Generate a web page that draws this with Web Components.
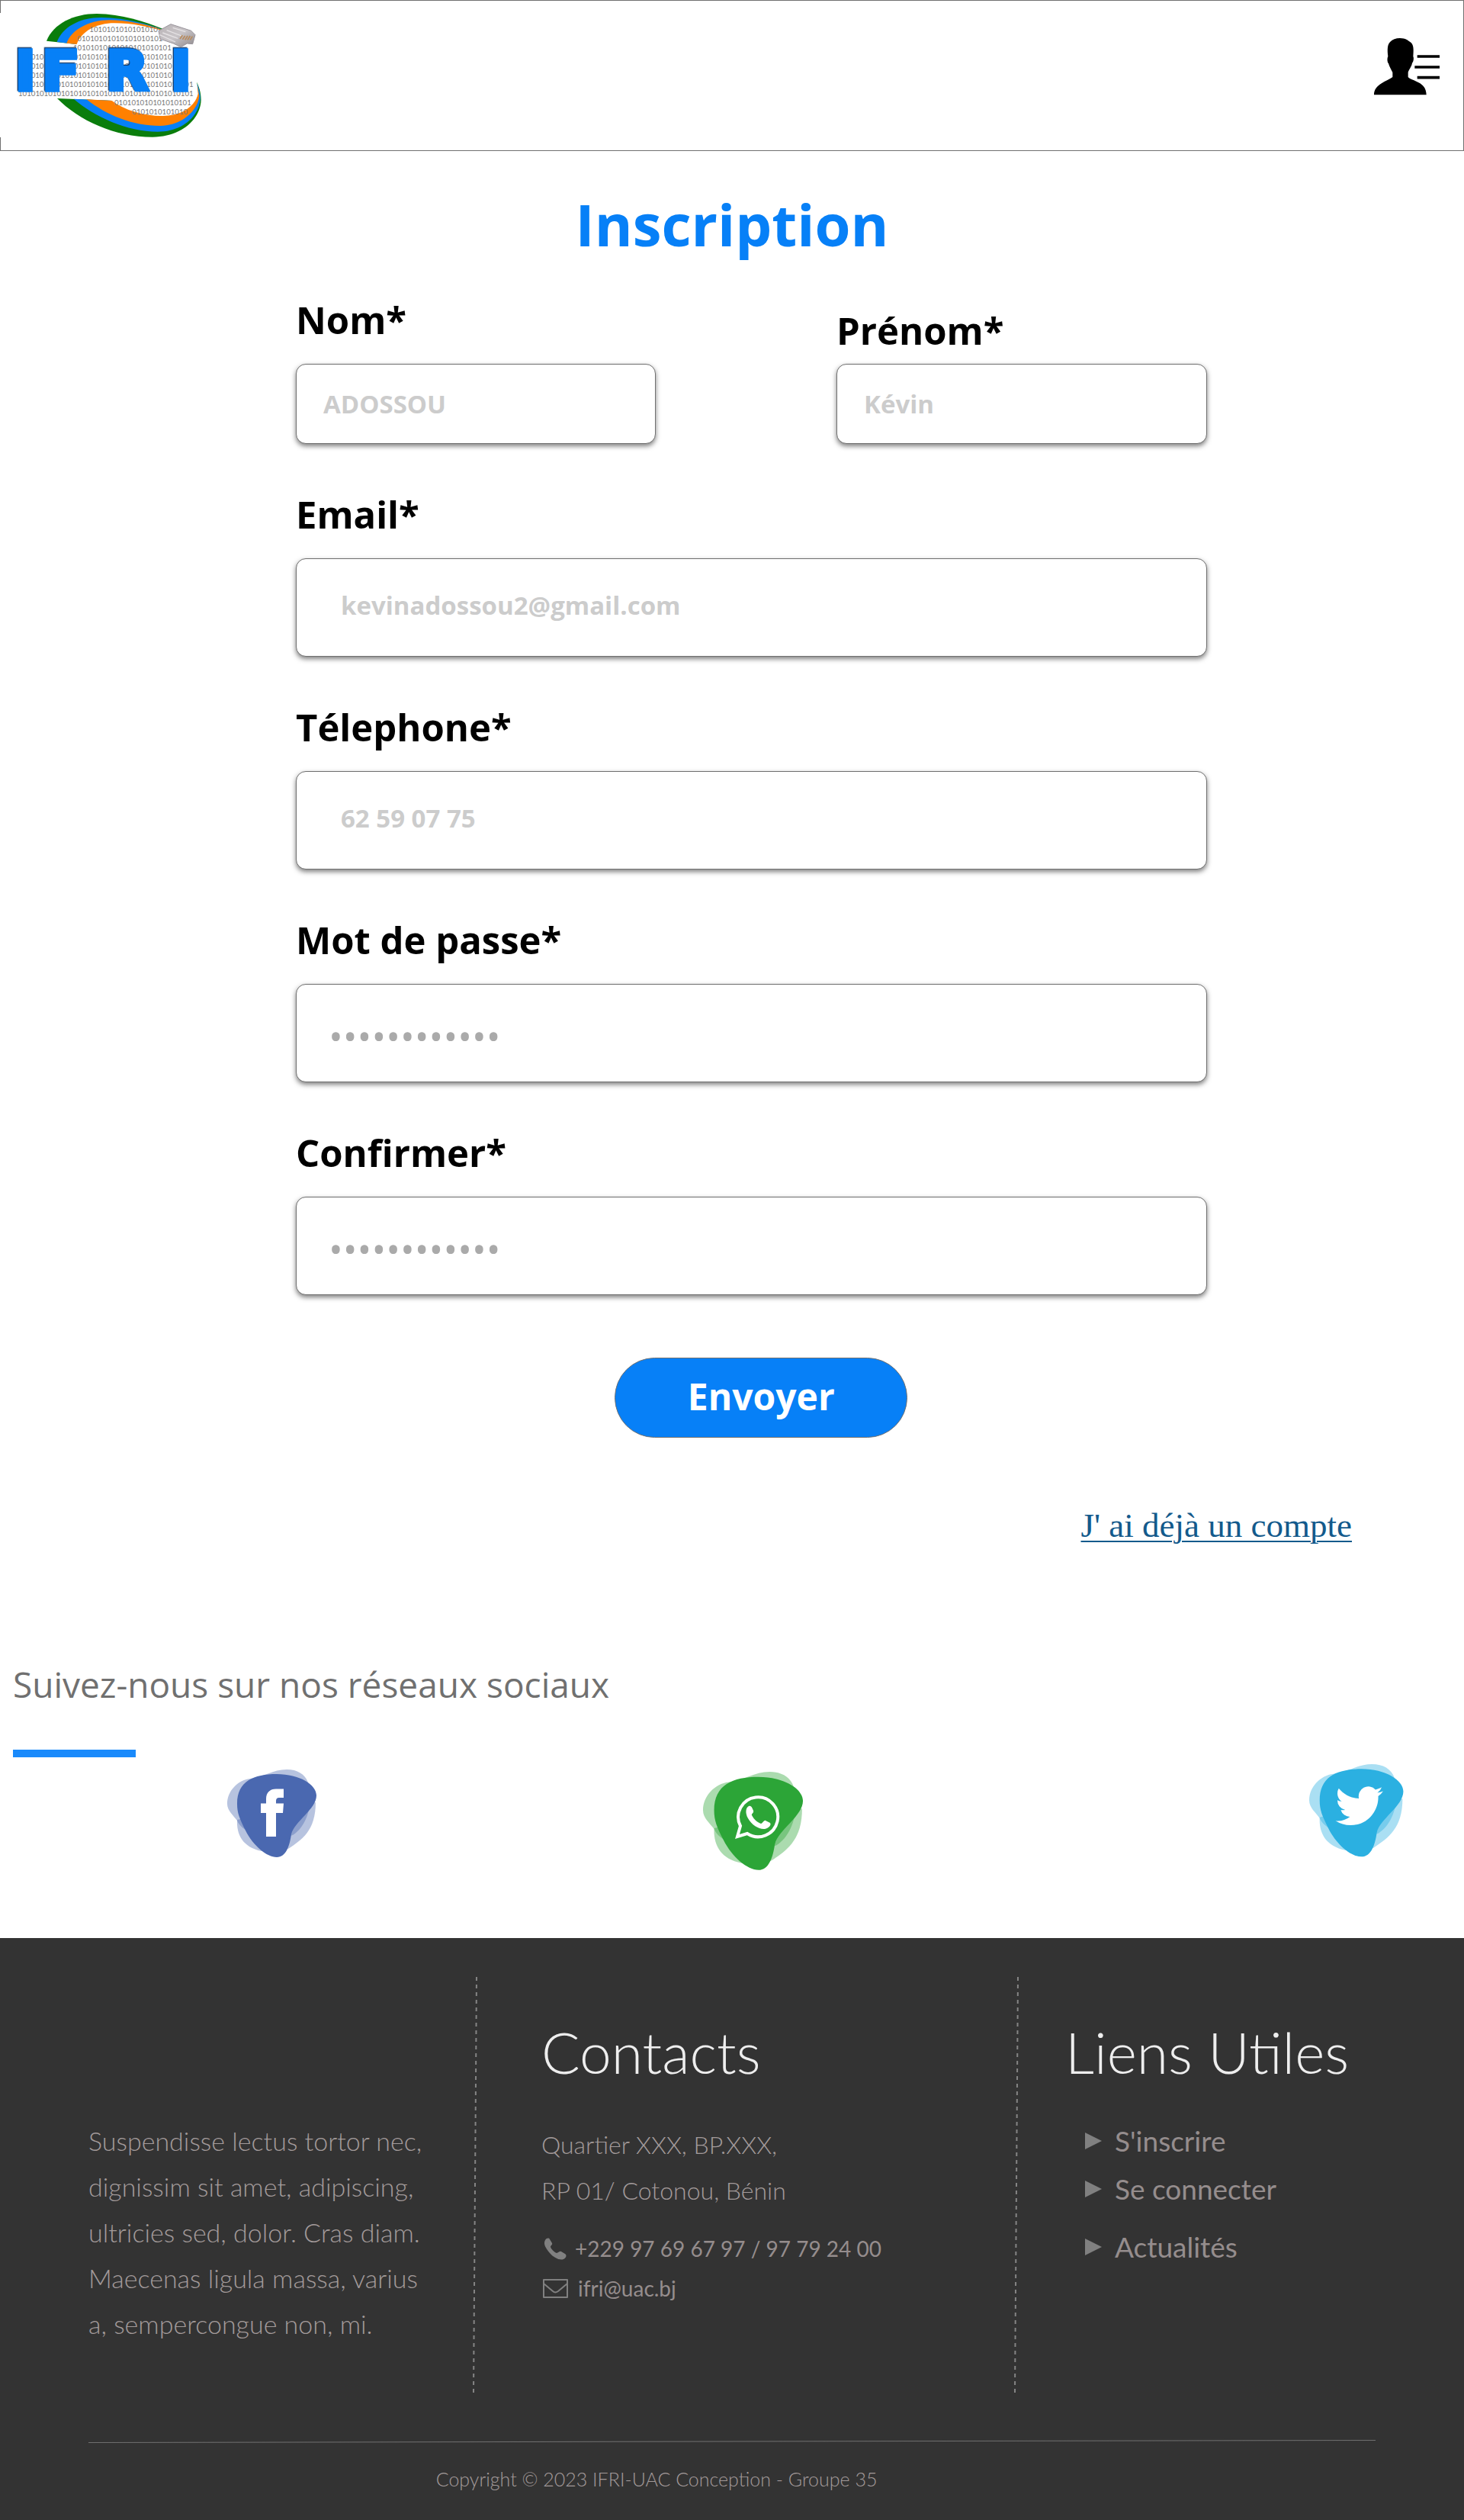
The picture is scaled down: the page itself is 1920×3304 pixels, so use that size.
<!DOCTYPE html>
<html lang="fr">
<head>
<meta charset="utf-8">
<meta name="viewport" content="width=device-width, initial-scale=1">
<title>IFRI - Inscription</title>
<style>
  body { margin: 0; background: #fff; font-family: "Open Sans", "Noto Sans", sans-serif; }
</style>
</head>
<body>
<ifri-page></ifri-page>

<template id="t-header">
  <style>
    :host { display: block; }
    header { display: flex; justify-content: space-between; align-items: center; height: 198px; padding: 0 32px 2px 0; box-sizing: border-box; box-shadow: inset 0 0 0 1px #707070; }
    a, button, svg { display: block; }
    .logo svg { background: #fff; }
    .name { filter: drop-shadow(-4px -4px 1px #123a6b); }
    button { border: 0; padding: 0; background: none; cursor: pointer; }
  </style>
  <header>
    <a class="logo" href="#" aria-label="IFRI">
      <svg width="272" height="163" viewBox="0 48 816 489">
        <defs>
          <linearGradient id="plug" x1="0" y1="0" x2="1" y2="1"><stop offset="0" stop-color="#b9b3b6"/><stop offset=".5" stop-color="#c9c5c8"/><stop offset="1" stop-color="#8d888b"/></linearGradient>
        </defs>
        <path fill="#0a7d0c" d="M183 158C210 90 290 51 380 51C480 52 570 82 640 110V118L302 171Z"/>
        <path fill="#0780f7" d="M224 162C245 105 310 66 400 66C490 68 570 88 640 113V118L302 171Z"/>
        <path fill="#ff8000" d="M262 167C280 115 350 76 430 76C500 76 580 94 640 115V119L302 171Z"/>
        <path fill="#fff" d="M302 171C320 120 380 88 450 88C520 88 590 103 640 119V200H302Z"/>
        <path fill="#0a7d0c" d="M225 384C310 470 450 536 600 536C720 536 790 460 791 390C791 360 783 340 775 322L700 380L440 393Z"/>
        <path fill="#0780f7" d="M290 386C370 455 500 515 620 515C730 515 787 440 788 385C788 360 782 342 776 328L700 380L440 393Z"/>
        <path fill="#ff8000" d="M340 388C420 450 520 492 630 492C730 490 780 420 784 375L777 334L700 380L440 393Z"/>
        <path fill="#fff" d="M440 393C490 430 560 453 640 453C715 453 768 415 779 366L775 322L600 300Z"/>
        <g fill="#777" font-family="Lato, sans-serif" font-size="29">
          <text x="352" y="122">1010101010101010</text>
          <text x="304" y="158">01010101010101010101</text>
          <text x="288" y="194">10101010101010101010101</text>
          <text x="122" y="230">010101010101010101010101010101010</text>
          <text x="122" y="266">010101010101010101010101010101010</text>
          <text x="122" y="302">010101010101010101010101010101010</text>
          <text x="122" y="338">01010101010101010101010101010101010101</text>
          <text x="72" y="374">10101010101010101010101010101010101010101</text>
          <text x="450" y="410">010101010101010101</text>
          <text x="520" y="446">0101010101010</text>
        </g>
        <g class="name" font-family="DejaVu Sans, sans-serif" font-weight="700" font-size="216" fill="#0780f7" stroke="#0780f7" stroke-width="16">
          <text x="60" y="350">I</text><text x="166" y="350">F</text><text x="418" y="350">R</text><text x="672" y="350">I</text>
        </g>
        <path fill="url(#plug)" stroke="#98939a" stroke-width="3" d="M624 118L672 92L752 118L768 134L758 170L736 168L712 182L682 168L630 150Z"/>
        <path fill="none" stroke="#e6e3e5" stroke-width="4" d="M640 126L700 148M656 116L714 138M680 106L730 122M628 134L690 162"/>
        <path stroke="#b98b5c" stroke-width="5" d="M708 150L718 136M718 152L728 138M728 154L738 138M738 154L748 138M748 154L757 140"/>
      </svg>
    </a>
    <button type="button" aria-label="Menu du compte">
      <svg width="86" height="96" viewBox="126 60 258 288">
        <path d="M228 60C250 60 260 69 268 75C283 84 282 106 280 132C284 140 280 155 276 158C274 172 262 185 260 195V213C275 230 332 230 332 283H126C126 240 178 230 199 213V195C194 185 186 172 183 160C178 155 177 140 181 132C178 105 178 85 190 74C198 65 212 60 228 60Z"/>
        <path stroke="#000" stroke-width="11" d="M296 132H384M286 174H384M296 215H384"/>
      </svg>
    </button>
  </header>
</template>

<template id="t-field">
  <style>
    :host { display: flex; flex-direction: column; min-width: 0; --box: 129px; --pad: 0 24px 6px 58px; }
    :host([size="small"]) { --box: 105px; --pad: 0 24px 0 35px; }
    :host([type="password"]) { --pad: 6px 24px 0 42px; }
    label { font-weight: 700; font-size: 49px; line-height: 64px; margin-bottom: 26px; color: #000; white-space: nowrap; }
    :host([tight]) label { margin-bottom: 12px; }
    input { width: 100%; height: var(--box); box-sizing: border-box; padding: var(--pad); border: 1px solid #707070; border-radius: 13px; background: #fff; box-shadow: 0 3px 6px rgba(0,0,0,.5); font: 700 33px "Open Sans", sans-serif; color: #333; }
    input::placeholder { color: #ccc; opacity: 1; }
    :host([type="password"]) input { font-size: 50px; font-weight: 400; }
    :host([type="password"]) input::placeholder { color: #aaa; }
  </style>
  <label for="i"><slot></slot></label>
  <input id="i">
</template>

<template id="t-form">
  <style>
    :host { display: block; }
    h1 { margin: 46px 0 43px; text-align: center; font-size: 76px; line-height: 100px; font-weight: 700; color: #0780f7; }
    form { display: flex; flex-direction: column; gap: 60px; margin: 0 337px 0 388px; }
    .pair { display: grid; grid-template-columns: 472fr 486fr; column-gap: 237px; align-items: end; }
    button { width: 384px; height: 105px; margin: 22px 0 0 35%; padding: 0 0 4px; border: 1px solid #707070; border-radius: 53px; background: #0780f7; color: #fff; font: 700 48px "Open Sans", sans-serif; cursor: pointer; }
    p { margin: 85px 147px 0 0; text-align: right; font: 45px/60px "Liberation Serif", serif; }
    a { color: #135a8c; text-decoration-thickness: 2px; text-underline-offset: 5px; }
  </style>
  <h1>Inscription</h1>
  <form>
    <div class="pair">
      <ifri-field size="small" placeholder="ADOSSOU">Nom*</ifri-field>
      <ifri-field size="small" tight placeholder="Kévin">Prénom*</ifri-field>
    </div>
    <ifri-field type="email" placeholder="kevinadossou2@gmail.com">Email*</ifri-field>
    <ifri-field type="tel" placeholder="62 59 07 75">Télephone*</ifri-field>
    <ifri-field type="password" placeholder="••••••••••••">Mot de passe*</ifri-field>
    <ifri-field type="password" placeholder="••••••••••••">Confirmer*</ifri-field>
    <button type="submit">Envoyer</button>
  </form>
  <p><a href="#">J' ai déjà un compte</a></p>
</template>

<template id="t-blob">
  <style>
    :host { display: block; }
    a, svg { display: block; width: max-content; }
  </style>
  <a href="#">
    <svg width="140" height="140" viewBox="0 0 140 140">
      <g id="blob">
        <path opacity=".4" d="M0 45C0 28 14 14 30 12C48 10 60 0 78 0C92 0 102 6 106 17C114 45 104 75 86 86C60 95 20 85 13 67C8 60 0 54 0 45Z"/>
        <path opacity=".4" d="M13 66C12 85 20 102 45 107L80 104C98 92 116 80 116 43L80 50Z"/>
        <path d="M13 45C13 15 35 6 65 6C95 6 117 20 117 34C117 52 88 68 84 85C82 100 77 115 65 115C52 115 34 100 24 80C16 64 13 57 13 45Z"/>
      </g>
      <g id="glyph"></g>
    </svg>
  </a>
</template>

<template id="t-social">
  <style>
    :host { display: block; margin-top: 144px; padding-bottom: 88px; }
    h2 { margin: 0 17px; padding-bottom: 52px; font-weight: 400; font-size: 46px; line-height: 68px; color: #707070; }
    hr { width: 161px; height: 10px; margin: 0 17px 9px; border: 0; background: #1a8afb; }
    nav { display: grid; grid-template-columns: 624fr 795fr minmax(0, 125fr); padding: 0 78px 0 298px; }
  </style>
  <h2>Suivez-nous sur nos réseaux sociaux</h2>
  <hr>
  <nav>
    <ifri-social-icon name="facebook"></ifri-social-icon>
    <ifri-social-icon name="whatsapp"></ifri-social-icon>
    <ifri-social-icon name="twitter"></ifri-social-icon>
  </nav>
</template>

<template id="t-footer">
  <style>
    :host { display: block; background: #333; color: #958d8d; font-family: Lato, "Open Sans", sans-serif; font-weight: 300; }
    footer { padding: 51px 116px 34px; }
    a { color: inherit; text-decoration: none; }
    .cols { display: grid; grid-template-columns: 505fr 4px 706fr 4px 469fr; height: 546px; }
    .cols > div { min-width: 0; }
    .about { padding-top: 185px; }
    .contact { padding: 48px 0 0 85px; }
    .links { padding: 48px 0 0 62px; }
    .rule { display: block; width: 4px; height: 546px; overflow: visible; }
    h2 { margin: 0; font-weight: 300; font-size: 75px; line-height: 100px; color: #eee; white-space: nowrap; }
    p { margin: 0; line-height: 60px; white-space: nowrap; color: #a39b9b; }
    .about p { font-size: 34px; }
    .contact p { font-size: 32px; }
    .contact h2 { margin-bottom: 42px; }
    ul { list-style: none; margin: 0; padding: 0; font-weight: 400; }
    .reach { margin-top: 20px; font-size: 28px; line-height: 52px; }
    .reach a { display: flex; align-items: center; gap: 10px; white-space: nowrap; }
    .links ul { margin: 35px 0 0 26px; font-size: 37px; line-height: 63px; }
    .links a { display: flex; align-items: center; gap: 17px; }
    .links .apart { margin-top: 13px; }
    .end { display: block; width: 100%; height: 4px; margin: 61px 0 27px; }
    small { display: block; margin-left: 27%; font-size: 25px; line-height: 40px; color: #a39b9b; }
  </style>
  <footer>
    <div class="cols">
      <div class="about">
        <p>Suspendisse lectus tortor nec,<br>dignissim sit amet, adipiscing,<br>ultricies sed, dolor. Cras diam.<br>Maecenas ligula massa, varius<br>a, sempercongue non, mi.</p>
      </div>
      <svg class="rule" viewBox="0 0 4 546" preserveAspectRatio="none"><path d="M4 0L0 546" stroke="#858585" stroke-width="2" stroke-dasharray="5 5"/></svg>
      <div class="contact">
        <h2>Contacts</h2>
        <p>Quartier XXX, BP.XXX,<br>RP 01/ Cotonou, Bénin</p>
        <ul class="reach">
          <li><a href="tel:+22997696797"><svg width="34" height="34" viewBox="0 0 34 34"><path fill="#808080" d="M5 6C7 3 10 3 11 5L14 10C15 12 12 13 12 15C13 18 17 22 20 23C22 23 24 20 26 21L31 24C34 26 32 30 29 31C24 33 16 29 11 23C6 17 2 11 5 6Z"/></svg><span>+229 97 69 67 97 / 97 79 24 00</span></a></li>
          <li><a href="mailto:ifri@uac.bj"><svg width="38" height="28" viewBox="0 0 38 28"><path fill="none" stroke="#808080" stroke-width="2" stroke-linejoin="round" d="M3 3H34V26H3ZM3 8L15 18Q18 21 22 18L34 8"/></svg><span>ifri@uac.bj</span></a></li>
        </ul>
      </div>
      <svg class="rule" viewBox="0 0 4 546" preserveAspectRatio="none"><path d="M4 0L0 546" stroke="#858585" stroke-width="2" stroke-dasharray="5 5"/></svg>
      <div class="links">
        <h2>Liens Utiles</h2>
        <ul>
          <li><a href="#"><svg width="22" height="22" viewBox="0 0 22 22"><path fill="#808080" d="M0 0L22 11L0 22Z"/></svg>S'inscrire</a></li>
          <li><a href="#"><svg width="22" height="22" viewBox="0 0 22 22"><path fill="#808080" d="M0 0L22 11L0 22Z"/></svg>Se connecter</a></li>
          <li class="apart"><a href="#"><svg width="22" height="22" viewBox="0 0 22 22"><path fill="#808080" d="M0 0L22 11L0 22Z"/></svg>Actualités</a></li>
        </ul>
      </div>
    </div>
    <svg class="end" viewBox="0 0 1688 4" preserveAspectRatio="none"><path d="M0 3.5L1688 .5" stroke="#707070"/></svg>
    <small>Copyright © 2023 IFRI-UAC Conception - Groupe 35</small>
  </footer>
</template>

<script>
  class IfriElement extends HTMLElement {
    constructor() {
      super();
      const root = this.attachShadow({ mode: 'open' });
      root.append(document.getElementById(this.constructor.template).content.cloneNode(true));
    }
  }

  class IfriHeader extends IfriElement { static template = 't-header'; }
  class IfriSocial extends IfriElement { static template = 't-social'; }
  class IfriFooter extends IfriElement { static template = 't-footer'; }
  class IfriForm extends IfriElement {
    static template = 't-form';
    connectedCallback() {
      this.shadowRoot.querySelector('form').addEventListener('submit', e => e.preventDefault());
    }
  }

  class IfriField extends IfriElement {
    static template = 't-field';
    connectedCallback() {
      const input = this.shadowRoot.querySelector('input');
      input.type = this.getAttribute('type') || 'text';
      input.placeholder = this.getAttribute('placeholder') || '';
    }
  }

  const NETWORKS = {
    facebook: { label: 'Facebook', fill: '#4a68b0', place: 'translate(0 7)',
      glyph: '<path transform="translate(0 7)" fill="#fff" d="M51 88V57H44V44.500H51V39C51 30 56 25.500 64 25.500H74V37H68C65 37 64 39 64 41V44.500H74L73 57H64V88Z"/>' },
    whatsapp: { label: 'WhatsApp', fill: '#2ca537', place: 'translate(0 10) scale(1.12)',
      glyph: '<g transform="translate(0 10)"><path fill="none" stroke="#fff" stroke-width="4" d="M45 85L49 71A26 26 0 1 1 58 81Z"/><path fill="#fff" d="M60 45C63 44 64 46 66 51C67 54 63 55 64 57C67 63 71 66 76 68C78 68 80 63 82 64L88 67C90 70 86 74 81 75C74 76 64 70 59 61C55 54 56 47 60 45Z"/></g>' },
    twitter: { label: 'Twitter', fill: '#2bb0e1', place: 'scale(1.055)',
      glyph: '<path transform="translate(34.500 23.500) scale(2.6)" fill="#fff" d="M23.953 4.570a10 10 0 01-2.825.775 4.958 4.958 0 002.163-2.723c-.951.555-2.005.959-3.127 1.184a4.920 4.920 0 00-8.384 4.482C7.690 8.095 4.067 6.130 1.640 3.162a4.822 4.822 0 00-.666 2.475c0 1.710.870 3.213 2.188 4.096a4.904 4.904 0 01-2.228-.616v.060a4.923 4.923 0 003.946 4.827 4.996 4.996 0 01-2.212.085 4.936 4.936 0 004.604 3.417 9.867 9.867 0 01-6.102 2.105c-.390 0-.779-.023-1.170-.067a13.995 13.995 0 007.557 2.209c9.053 0 13.998-7.496 13.998-13.985 0-.210 0-.420-.015-.630A9.935 9.935 0 0024 4.590z"/>' }
  };

  class IfriSocialIcon extends IfriElement {
    static template = 't-blob';
    connectedCallback() {
      const net = NETWORKS[this.getAttribute('name')];
      const blob = this.shadowRoot.getElementById('blob');
      this.shadowRoot.querySelector('a').setAttribute('aria-label', net.label);
      blob.setAttribute('fill', net.fill);
      blob.setAttribute('transform', net.place);
      this.shadowRoot.getElementById('glyph').innerHTML = net.glyph;
    }
  }

  class IfriPage extends HTMLElement {
    constructor() {
      super();
      this.attachShadow({ mode: 'open' }).innerHTML =
        '<style>:host{display:block}</style><ifri-header></ifri-header><main><ifri-form></ifri-form><ifri-social></ifri-social></main><ifri-footer></ifri-footer>';
    }
  }

  customElements.define('ifri-header', IfriHeader);
  customElements.define('ifri-field', IfriField);
  customElements.define('ifri-form', IfriForm);
  customElements.define('ifri-social-icon', IfriSocialIcon);
  customElements.define('ifri-social', IfriSocial);
  customElements.define('ifri-footer', IfriFooter);
  customElements.define('ifri-page', IfriPage);
</script>
</body>
</html>
